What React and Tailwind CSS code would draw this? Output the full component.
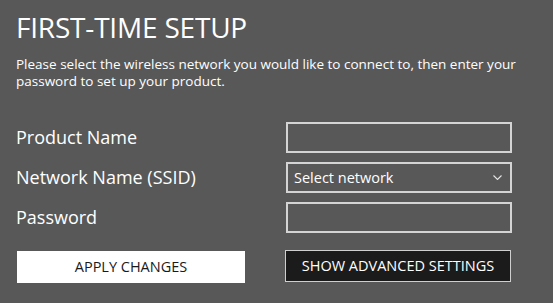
import React from 'react';

function Field({ children }) {
  return (
    <div className="w-[226px] h-[31px] border-2 border-[#d4d4d4] bg-[#585858] flex items-center pl-[6px] pr-[8px]">
      {children}
    </div>
  );
}

export default function App() {
  return (
    <div className="w-[553px] h-[303px] bg-[#585858] text-white font-['Open_Sans',sans-serif] overflow-hidden px-[16px] pt-[8px]">
      <h1 className="text-[28px] leading-[38px] tracking-[-0.2px]">FIRST-TIME SETUP</h1>
      <p className="mt-[10px] text-[13.5px] leading-[17px] w-[530px]">
        Please select the wireless network you would like to connect to, then enter your password to set up your product.
      </p>

      <div className="mt-[32px] grid grid-cols-[270px_226px] gap-y-[9px] items-center">
        <label className="text-[18px] leading-[31px]">Product Name</label>
        <Field />
        <label className="text-[18px] leading-[31px]">Network Name (SSID)</label>
        <Field>
          <span className="text-[14.5px] flex-1">Select network</span>
          <svg width="9" height="5" viewBox="0 0 9 5" fill="none" stroke="#e5e5e5" strokeWidth="1.1">
            <path d="M0.5 0.5l4 4 4-4" />
          </svg>
        </Field>
        <label className="text-[18px] leading-[31px]">Password</label>
        <Field />
      </div>

      <div className="mt-[17px] flex items-start">
        <button className="mt-[1px] ml-[1px] w-[228px] h-[32px] bg-white text-[#1a1a1a] text-[14.5px]">APPLY CHANGES</button>
        <button className="ml-[40px] w-[226px] h-[32px] bg-[#1b1b1b] border border-[#cfcfcf] text-white text-[14.5px]">SHOW ADVANCED SETTINGS</button>
      </div>
    </div>
  );
}
